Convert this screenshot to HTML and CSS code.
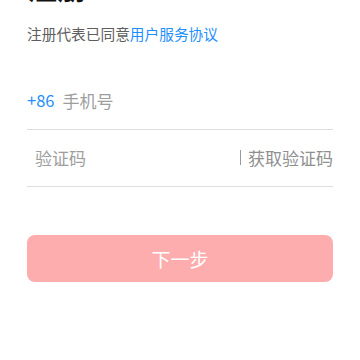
FILE: index.html
```html
<!DOCTYPE html>
<html lang="zh-CN">
<head>
    <meta charset="UTF-8">
    <meta name="viewport" content="width=device-width, initial-scale=1.0">
    <title>注册</title>
    <link rel="stylesheet" href="styles.css">
</head>
<body>
    <div class="container">
        <h2 class="titulo">注册</h2>
        <p class="aviso">注册代表已同意<span class="link">用户服务协议</span></p>

        <div class="campo">
            <span class="codigo">+86</span>
            <input class="entrada" type="tel" placeholder="手机号">
        </div>
        <div class="campo campo-codigo">
            <input class="entrada" type="text" placeholder="验证码">
            <span class="separador"></span>
            <span class="obter">获取验证码</span>
        </div>

        <button class="proximo">下一步</button>
    </div>
</body>
</html>
```

FILE: styles.css
```css
body {
    margin: 0;
    background: #ffffff;
    font-family: "Noto Sans CJK SC", "Noto Sans", sans-serif;
}
.container {
    padding: 0 27px;
}
.titulo {
    font-size: 30px;
    font-weight: bold;
    color: #111111;
    line-height: 30px;
    margin: -29px 0 0;
}
.aviso {
    font-size: 14.7px;
    color: #5e5e5e;
    margin: 22px 0 0;
    line-height: 22px;
}
.link {
    color: #1e8ffb;
}
.campo {
    display: flex;
    align-items: center;
    box-sizing: border-box;
    height: 57px;
    padding-bottom: 2px;
    border-bottom: 1px solid #dddddd;
}
.campo:first-of-type {
    margin-top: 28px;
}
.codigo {
    color: #1e8ffb;
    font-size: 16.5px;
    margin-right: 8px;
}
.entrada {
    flex-grow: 1;
    min-width: 0;
    border: none;
    outline: none;
    padding: 0;
    font-family: inherit;
    font-size: 17px;
    color: #333333;
    background: transparent;
}
.entrada::placeholder {
    color: #9e9e9e;
}
.campo-codigo .entrada {
    padding-left: 8px;
}
.separador {
    width: 1px;
    height: 15px;
    background: #999999;
    margin-right: 7px;
}
.obter {
    font-size: 17px;
    color: #8f8f8f;
}
.proximo {
    display: block;
    width: 100%;
    height: 47px;
    margin-top: 48px;
    border: none;
    border-radius: 8px;
    background: #fdadad;
    color: #ffffff;
    font-family: inherit;
    font-size: 19px;
    cursor: pointer;
}
```
